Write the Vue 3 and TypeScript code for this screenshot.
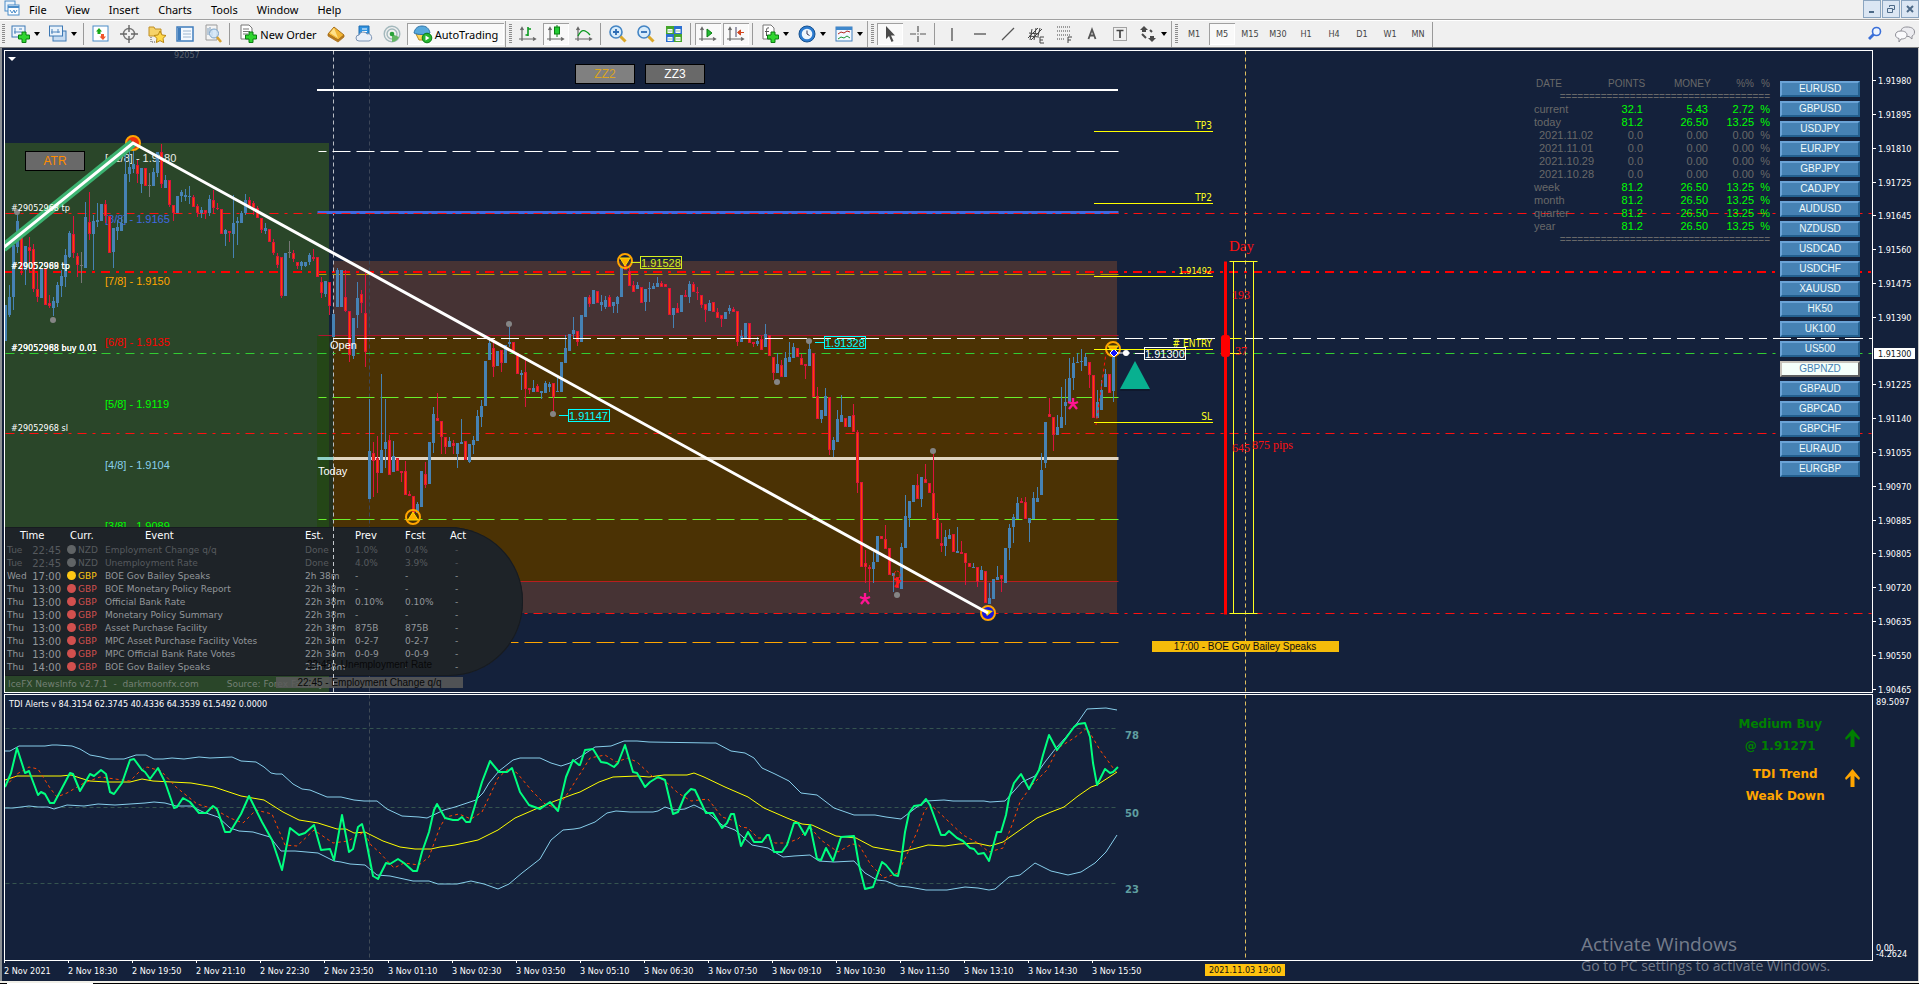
<script setup lang="ts">
interface Tool {
  kind: 'button' | 'drop' | 'sep' | 'grip' | 'period'
  icon?: string
  label?: string
  text?: string
  on?: boolean
}

const menus: string[] = ['File', 'View', 'Insert', 'Charts', 'Tools', 'Window', 'Help']

const axes = '<path d="M4 4v13M1 15h16M2.500 6l1.500-2.500L5.500 6M15 13.500l2.500 1.500-2.500 1.500" fill="none" stroke="#666" stroke-width="1.200"/>'
const plus = '<path d="M11 8h4v3h3.500v4H15v3.500h-4V15H7.500v-4H11z" fill="#2fd52f" stroke="#0a7d12"/>'

const icons: Record<string, string> = {
  newChart: '<rect x="1" y="2" width="13" height="11" fill="#eef5fc" stroke="#3d78b4"/><path d="M4 4v6M3 8h8M8 5h3" stroke="#4c84bc" fill="none"/>' + plus,
  profiles: '<rect x="5" y="7" width="13" height="10" fill="#c7dcf1" stroke="#3d78b4"/><rect x="1.500" y="2" width="13" height="10" fill="#eaf3fb" stroke="#3d78b4"/><path d="M4 5v5M3 8h9M10 5v4" stroke="#4c84bc"/>',
  market: '<rect x="2" y="2" width="15" height="15" fill="#fff" stroke="#4a8cc8"/><path d="M8 4l3 3.500H9.500V10h-3V7.500H5z" fill="#18a818"/><path d="M12 16l-3.500-3.500H10V10h3v2.500h2z" fill="#f0562a"/>',
  target: '<circle cx="10" cy="10" r="5.500" fill="none" stroke="#777" stroke-width="1.400"/><path d="M10 1v7M10 12v7M1 10h7M12 10h7" stroke="#666" stroke-width="1.400"/>',
  navigator: '<path d="M2 3h5l1 2h6v7H2z" fill="#f6d36a" stroke="#bf8f26"/><path d="M4 13v5M5 18h4" stroke="#555" stroke-dasharray="1 1"/><path d="M13 7l1.900 3.900 4.100.6-3 2.900.7 4.200-3.700-2-3.700 2 .7-4.200-3-2.900 4.100-.6z" fill="#ffd94a" stroke="#b98712"/>',
  dataWindow: '<rect x="2" y="3" width="16" height="14" fill="#f4f9ff" stroke="#3f7cbc" stroke-width="1.500"/><path d="M4.500 3.500v13" stroke="#3f7cbc" stroke-width="3"/><path d="M8 7h8M8 10h8M8 13h8" stroke="#9db6cf"/>',
  tester: '<path d="M3 1h11v15H3z" fill="#f4f4f4" stroke="#9a9a9a"/><path d="M5 4v7M7 3v6M9 5v7" stroke="#7d9cba"/><circle cx="11" cy="9.500" r="4.500" fill="#cfe5f7" fill-opacity=".8" stroke="#7aa2c8"/><path d="M14 13l4 5" stroke="#d6a12e" stroke-width="2.500"/>',
  newOrder: '<path d="M3 1h8l3 3v11H3z" fill="#fff" stroke="#777"/><path d="M5 5h6M5 7.500h7M5 10h5" stroke="#777"/>' + plus,
  book: '<path d="M8 3l10 8-6 5L2 10z" fill="#f2b634" stroke="#a8701c"/><path d="M2 10l10 6 6-5v2l-6 5-10-6z" fill="#b87a1e" stroke="#a8701c" stroke-width=".8"/><path d="M8 4l-4 5 8 5z" fill="#ffe18a"/>',
  cloud: '<path d="M5 2h10v10H5z" fill="#2f92e0" stroke="#1f6db0"/><path d="M8 5h5M8 7.500h5" stroke="#fff"/><path d="M5 17a3 3 0 010-6 4.500 4.500 0 018-1 3.500 3.500 0 012 7z" fill="#e9eff8" stroke="#7d94b4"/>',
  signal: '<g fill="none" stroke="#a3b8bc" stroke-width="1.400"><circle cx="10" cy="10" r="7.800"/><circle cx="10" cy="10" r="5"/></g><path d="M10 10v8a8 8 0 007-5" fill="#63b763"/><circle cx="10" cy="10" r="2.300" fill="#2aa13a"/>',
  auto: '<path d="M3 10h12l-2 6H6z" fill="#ffd45a" stroke="#b98b1d"/><path d="M1 9c1-5 4-7 8-7s7 2 8 7c-4 2-12 2-16 0z" fill="#58a9dc" stroke="#2f74a8"/><circle cx="14" cy="14" r="4.800" fill="#26b62e" stroke="#0c7d16"/><path d="M12.500 11.500l4 2.500-4 2.500z" fill="#fff"/>',
  bars: axes + '<path d="M10 3v9M10 5h3M7.500 11H10" stroke="#0a9a1e" stroke-width="1.600" fill="none"/>',
  candles: axes + '<path d="M11 1v12" stroke="#0a7d12"/><rect x="8.500" y="3" width="5" height="7" fill="#22cc33" stroke="#0a7d12"/>',
  line: axes + '<path d="M4 12c3-6 6-8 12-1" fill="none" stroke="#0a9a1e" stroke-width="1.300"/>',
  zoomIn: '<circle cx="8" cy="8" r="6" fill="#d8ecfb" stroke="#4485c4" stroke-width="1.600"/><path d="M8 5v6M5 8h6" stroke="#2d6db4" stroke-width="1.800"/><path d="M12.500 12.500l5 5" stroke="#dba829" stroke-width="3"/>',
  zoomOut: '<circle cx="8" cy="8" r="6" fill="#d8ecfb" stroke="#4485c4" stroke-width="1.600"/><path d="M5 8h6" stroke="#2d6db4" stroke-width="1.800"/><path d="M12.500 12.500l5 5" stroke="#dba829" stroke-width="3"/>',
  tile: '<path d="M2 2h8v8H2zM10 10h8v8h-8z" fill="#45a52a"/><path d="M10 2h8v8h-8zM2 10h8v8H2z" fill="#2b6fd0"/><path d="M3.500 5h5v4h-5zM11.500 5h5v4h-5zM3.500 13h5v4h-5zM11.500 13h5v4h-5z" fill="#f4fafc"/><path d="M4 7h4M12 7h4M4 15h4M12 15h4" stroke="#9abf9a"/>',
  scroll: axes + '<path d="M9 5l5 4-5 4z" fill="#22bb33" stroke="#0a7d12"/>',
  shift: axes + '<path d="M10 3v10" stroke="#446"/><path d="M11.500 8.500l3-2.500v5zM14 8.500h4" fill="#d2451e" stroke="#d2451e"/>',
  indicators: '<path d="M3 1h8l3 3v11H3z" fill="#fff" stroke="#777"/><path d="M9 4c-3-1-2.500 2-2.500 8M5 7.500h4" stroke="#555" fill="none"/>' + plus,
  clock: '<circle cx="10" cy="10" r="8" fill="#2d7cd0" stroke="#17518f"/><circle cx="10" cy="10" r="5.300" fill="#eef6fd"/><path d="M10 6.500V10l2.500 1.500" stroke="#335" fill="none"/>',
  template: '<rect x="2" y="3" width="16" height="14" fill="#f4f9ff" stroke="#3f7cbc"/><path d="M2 4.500h16" stroke="#3f88cc" stroke-width="3"/><path d="M4 10l3-2 3 1 3-2 3 1" stroke="#b3261e" fill="none"/><path d="M4 15l3-2 3 1 3-2 3 2" stroke="#1d9632" fill="none"/>',
  cursor: '<path d="M6 2v13l3-3 2.500 6 2-1-2.500-5.500h4z" fill="#4a4a4a"/>',
  cross: '<path d="M10 2v6M10 12v6M2 10h6M12 10h6" stroke="#555" stroke-width="1.200"/><circle cx="10" cy="10" r=".7" fill="#555"/>',
  vline: '<path d="M10 4v13" stroke="#444" stroke-width="1.200"/>',
  hline: '<path d="M4 10h12" stroke="#444" stroke-width="1.200"/>',
  trend: '<path d="M4 16L16 4" stroke="#555" stroke-width="1.200"/>',
  channel: '<path d="M2 14L12 4M5 16L16 5M3 9l10 1M3 12l10 1M6 5l-2 11M10 4L8 16M14 4l-2 8" stroke="#444"/><path d="M18 13h-4v6h4M14 16h3" stroke="#444" fill="none"/>',
  fibo: '<path d="M3 3h14M3 7h14M3 11h14M3 15h8" stroke="#444" stroke-dasharray="1 1"/><path d="M18 13h-4v6M14 16h3" stroke="#444" fill="none"/>',
  label: '<rect x="3.500" y="3.500" width="13" height="13" fill="none" stroke="#555" stroke-dasharray="1 1"/><path d="M6.500 6.500h7M10 6v8" stroke="#444" stroke-width="1.700"/>',
  letter: '<path d="M6.500 15L10 5.500 13.500 15M7.500 11.500h5" fill="none" stroke="#555" stroke-width="1.800"/>',
  shapes: '<path d="M6 2l4 4H8v2H4V6H2zM14 18l-4-4h2v-2h4v2h2z" fill="#4a4a4a"/><path d="M4 10l4 4M12 6l2 2" stroke="#4a4a4a" stroke-width="2"/>',
}

const b = (icon: string, label: string, on = false): Tool => ({ kind: 'button', icon, label, on })
const d = (icon: string, label: string): Tool => ({ kind: 'drop', icon, label })
const sep: Tool = { kind: 'sep' }
const grip: Tool = { kind: 'grip' }

const tools: Tool[] = [
  grip, d('newChart', 'New chart'), d('profiles', 'Profiles'), sep,
  b('market', 'Market Watch'), b('target', 'Data Window'), b('navigator', 'Navigator'), b('dataWindow', 'Terminal'), b('tester', 'Strategy Tester'), sep,
  { kind: 'button', icon: 'newOrder', label: 'New Order', text: 'New Order' },
  b('book', 'MetaEditor'), b('cloud', 'Virtual Hosting'), b('signal', 'Signals'),
  { kind: 'button', icon: 'auto', label: 'AutoTrading', text: 'AutoTrading', on: true },
  grip, b('bars', 'Bar chart'), b('candles', 'Candlesticks', true), b('line', 'Line chart'), sep,
  b('zoomIn', 'Zoom in'), b('zoomOut', 'Zoom out'), b('tile', 'Tile windows'), sep,
  b('scroll', 'Auto scroll', true), b('shift', 'Chart shift', true), sep,
  d('indicators', 'Indicators'), d('clock', 'Periods'), d('template', 'Templates'),
  grip, b('cursor', 'Cursor', true), b('cross', 'Crosshair'), sep,
  b('vline', 'Vertical line'), b('hline', 'Horizontal line'), b('trend', 'Trendline'), b('channel', 'Equidistant channel'), b('fibo', 'Fibonacci'),
  b('letter', 'Text'), b('label', 'Text label'), d('shapes', 'Arrows'),
  grip,
  ...['M1', 'M5', 'M15', 'M30', 'H1', 'H4', 'D1', 'W1', 'MN'].map((t): Tool => ({ kind: 'period', text: t, label: t, on: t === 'M5' })),
]

const symbols: string[] = [
  'EURUSD', 'GBPUSD', 'USDJPY', 'EURJPY', 'GBPJPY', 'CADJPY', 'AUDUSD', 'NZDUSD', 'USDCAD', 'USDCHF',
  'XAUUSD', 'HK50', 'UK100', 'US500', 'GBPNZD', 'GBPAUD', 'GBPCAD', 'GBPCHF', 'EURAUD', 'EURGBP',
]

const stats: { name: string; v: [string, string, string]; sub?: boolean }[] = [
  { name: 'current', v: ['32.1', '5.43', '2.72'] },
  { name: 'today', v: ['81.2', '26.50', '13.25'] },
  { name: '2021.11.02', v: ['0.0', '0.00', '0.00'], sub: true },
  { name: '2021.11.01', v: ['0.0', '0.00', '0.00'], sub: true },
  { name: '2021.10.29', v: ['0.0', '0.00', '0.00'], sub: true },
  { name: '2021.10.28', v: ['0.0', '0.00', '0.00'], sub: true },
  { name: 'week', v: ['81.2', '26.50', '13.25'] },
  { name: 'month', v: ['81.2', '26.50', '13.25'] },
  { name: 'quarter', v: ['81.2', '26.50', '13.25'] },
  { name: 'year', v: ['81.2', '26.50', '13.25'] },
]
const rule = '='.repeat(36)

const news: { day: string; time: string; cur: string; level: string; event: string; est: string; prev: string; fcst: string }[] = [
  { day: 'Tue', time: '22:45', cur: 'NZD', level: 'done', event: 'Employment Change q/q', est: 'Done', prev: '1.0%', fcst: '0.4%' },
  { day: 'Tue', time: '22:45', cur: 'NZD', level: 'done', event: 'Unemployment Rate', est: 'Done', prev: '4.0%', fcst: '3.9%' },
  { day: 'Wed', time: '17:00', cur: 'GBP', level: 'mid', event: 'BOE Gov Bailey Speaks', est: '2h 38m', prev: '-', fcst: '-' },
  { day: 'Thu', time: '13:00', cur: 'GBP', level: 'high', event: 'BOE Monetary Policy Report', est: '22h 38m', prev: '-', fcst: '-' },
  { day: 'Thu', time: '13:00', cur: 'GBP', level: 'high', event: 'Official Bank Rate', est: '22h 38m', prev: '0.10%', fcst: '0.10%' },
  { day: 'Thu', time: '13:00', cur: 'GBP', level: 'high', event: 'Monetary Policy Summary', est: '22h 38m', prev: '-', fcst: '-' },
  { day: 'Thu', time: '13:00', cur: 'GBP', level: 'high', event: 'Asset Purchase Facility', est: '22h 38m', prev: '875B', fcst: '875B' },
  { day: 'Thu', time: '13:00', cur: 'GBP', level: 'high', event: 'MPC Asset Purchase Facility Votes', est: '22h 38m', prev: '0-2-7', fcst: '0-2-7' },
  { day: 'Thu', time: '13:00', cur: 'GBP', level: 'high', event: 'MPC Official Bank Rate Votes', est: '22h 38m', prev: '0-0-9', fcst: '0-0-9' },
  { day: 'Thu', time: '14:00', cur: 'GBP', level: 'high', event: 'BOE Gov Bailey Speaks', est: '23h 38m', prev: '-', fcst: '-' },
]

const prices: [string, number][] = [
  ['1.91980', 80], ['1.91895', 114], ['1.91810', 148], ['1.91725', 182], ['1.91645', 215], ['1.91560', 249],
  ['1.91475', 283], ['1.91390', 317], ['1.91225', 384], ['1.91140', 418], ['1.91055', 452], ['1.90970', 486],
  ['1.90885', 520], ['1.90805', 553], ['1.90720', 587], ['1.90635', 621], ['1.90550', 655], ['1.90465', 689],
]

const times: string[] = [
  '2 Nov 2021', '2 Nov 18:30', '2 Nov 19:50', '2 Nov 21:10', '2 Nov 22:30', '2 Nov 23:50', '3 Nov 01:10', '3 Nov 02:30', '3 Nov 03:50',
  '3 Nov 05:10', '3 Nov 06:30', '3 Nov 07:50', '3 Nov 09:10', '3 Nov 10:30', '3 Nov 11:50', '3 Nov 13:10', '3 Nov 14:30', '3 Nov 15:50',
]

/* Candles, one every 4px: direction, body top, body bottom, high, low ('.' = same as the body).
   Three units make a pixel; each run names the first candle and the y its values count from. */
const runs: [number, number, string][] = [
  [0, 40, `b 795 902 . .|b 772 825 735 830|b 615 770 590 810|b 543 620 520 640|r 563 690 . 705|b 617 690 . 735|r 620 632 590 700|r 627 748 612 757|r 748 770 700 785|b 688 775 . .|r 685 795 . .|r 790 797 765 805|b 783 805 770 828|b 735 790 725 800|b 708 738 690 770|b 645 710 628 740|b 578 652 572 655|r 582 640 528 655|r 648 675 640 710|g 674 677 635 730|b 531 685 485 .|r 545 582 455 600|b 543 583 525 690|b 540 546 490 560|b 492 543 . .|r 492 527 480 550|r 527 638 . .|b 563 636 . 685|b 560 573 540 600|b 548 573 530 .|b 402 548 330 .|b 380 402 330 425|b 372 388 320 400|r 375 403 360 430|b 385 432 . 460|r 385 437 . .|g 434 437 400 470|b 397 437 385 .|b 337 398 . 410|r 337 432 312 445|b 420 443 405 .|r 420 495 . 502|r 495 520 . 543|b 468 520 . .|b 456 468 450 487|b 465 470 447 482|b 467 472 438 492|r 470 500 465 .|r 497 520 492 530|b 510 520 502 535|r 510 520 . 537|b 478 520 465 527|r 480 503 450 520|r 503 507 490 510|r 507 582 . .|b 570 582 567 617|r 572 578 . 605|b 548 582 465 653|b 543 548 530 615|b 518 548 512 .|b 480 520 462 525|r 480 500 470 .|r 490 505 483 525|r 503 535 497 .|r 535 570 . 580|b 565 572 548 582|r 568 605 . .|r 605 638 597 645|r 648 675 640 685|r 652 768 . 775|b 640 768 . .|g 637 640 603 655|r 640 657 630 665|r 667 678 . 687|b 667 678 662 690|b 667 678 . 682|b 645 667 640 675|r 650 657 627 662|r 652 712 . .|r 725 760 710 775|b 723 763 . 770|r 725 797 . 825|b 822 890 . .|b 690 800 685 .|b 690 800 . .|r 772 812 690 815|r 812 945 . 965|b 835 948 . 958|b 775 825 725 865|r 763 790 750 820|r 820 935 700 980`],
  [91, 350, `b 303 448 148 .|r 308 332 275 440|r 325 370 258 430|b 300 368 72 .|b 275 297 148 355|r 270 375 255 .|b 318 365 272 .|r 323 363 . .|r 363 370 . 395|r 363 435 332 .|r 432 437 422 .|r 437 490 . .|b 462 488 455 .|b 363 470 . .|r 373 405 335 415|b 275 402 . .|b 192 278 170 310|r 205 213 130 .|r 213 262 . 313|r 262 290 . 313|b 273 290 262 .|r 278 287 270 313|b 280 313 . 355|b 275 283 207 .|r 273 330 . .|b 283 335 . 340|b 270 285 258 313|b 198 272 180 .|b 168 200 150 230|b 33 168 . .`],
  [121, 40, `b 908 960 900 .|r 925 980 897 1010|b 932 978 . .|r 930 970 . 995|b 915 970 . .|b 907 912 860 920|r 905 940 . .|r 940 1003 . .`],
  [129, 350, `b 68 75 60 120|r 65 117 30 170|r 113 120 . 132|b 115 127 90 .|r 108 127 103 .|b 122 130 . 148|b 100 130 93 .|b 103 110 97 125|r 100 140 . 190`],
  [138, 330, `b 183 187 140 .|b 97 187 . .|b 55 100 15 .`],
  [141, 40, `b 882 933 . .|b 870 882 830 897|r 873 905 . 917|b 825 907 . .|b 770 830 . .|r 772 792 765 800|b 750 792 . .|r 753 790 . .|b 787 795 765 812|b 780 800 767 808|r 772 800 765 .|b 785 798 . 818|b 770 792 767 818|b 680 772 . .|r 675 690 . .|r 693 738 675 .|r 735 755 722 .|b 735 748 727 .|r 740 788 . .|b 747 787 . 812|b 745 748 727 785|b 738 746 728 .|b 728 741 710 .|r 730 740 722 .|r 732 742 . .|r 745 825 . .|b 805 825 . 863|r 803 818 790 .|b 765 815 . .|r 765 770 750 .|b 732 770 723 790|r 733 757 725 .|r 755 760 742 780|r 765 795 . 805|r 793 810 . 845|b 790 812 780 .|r 787 817 . .|r 815 835 805 .|r 825 838 . 860|b 815 838 . .|b 803 812 795 822|r 807 815 800 .|r 812 905 . 917|b 888 907 870 .|b 850 893 . .|r 850 908 . .|r 905 912 . 920|b 903 912 890 917|r 897 930 888 .|b 882 922 853 .|r 885 948 . .`],
  [192, 330, `r 80 130 . 150|b 103 130 70 .|r 105 142 90 .|b 83 142 65 .|b 80 97 37 .|b 52 85 40 .|r 55 82 . .|r 85 105 72 .|r 103 108 . 148|b 57 108 40 .|r 70 200 . .|r 197 268 170 .|b 240 268 . 280|b 198 258 173 .|r 200 360 . 375|b 330 360 322 380|b 268 335 240 .|b 255 275 195 .|r 263 290 . .|b 258 290 . .|r 255 305 223 .|r 307 458 300 490|r 457 712 . .|r 700 712 660 760|r 710 717 705 785|b 695 717 665 760|b 618 695 . .|r 617 628 . .|r 628 658 585 .|r 653 735 . .|b 730 737 . 785|r 740 775 . .|b 652 778 640 .|b 558 653 495 .|b 513 565 . 590|b 465 517 . .|r 465 507 432 .|b 440 507 . 530|r 447 458 402 .|r 460 488 . .|r 490 567 370 .|r 565 628 550 .|r 640 648 580 665|b 620 647 600 678|b 615 628 598 .|r 612 665 . .|b 663 668 590 .|r 665 672 632 .|r 670 700 . 765|r 698 712 . .|b 710 715 698 .|r 710 755 . 770|b 720 750 708 .|r 722 820 . .|b 805 822 760 .|b 747 808 . .|b 740 750 708 .|r 735 747 . 785|b 653 760 . .|b 595 653 583 690|b 560 590 552 640|b 520 568 500 .|r 513 518 503 .|r 515 567 500 .|b 565 578 . 635|b 503 568 487 .|b 503 515 470 .|b 420 495 370 .|b 277 400 . 415|r 252 262 203 .|r 262 315 . 362|b 292 315 255 .|b 262 293 172 .|b 215 228 148 285|b 143 217 85 .|b 98 145 80 180|b 95 98 68 .|b 92 96 57 122|b 80 107 70 .|r 97 135 . 175|r 135 265 . .|b 215 265 180 .|b 180 240 150 .|b 133 170 118 .|r 133 190 . .|b 80 182 . 215`],
]

interface Candle { kind: string; x: number; top: number; h: number; hi: number; len: number }

const candles: Candle[] = runs.flatMap(([first, base, data]) =>
  data.split('|').map((row, i) => {
    const [kind, t, bt, hi, lo] = row.split(' ')
    const y = (v: string) => Math.round(base + Number(v) / 3)
    const top = y(t)
    const bottom = Math.max(y(bt), top + 1)
    const high = hi === '.' ? top : y(hi)
    const low = lo === '.' ? bottom : y(lo)
    return { kind, x: 4 + 4 * (first + i), top, h: bottom - top, hi: high, len: low - high }
  }),
)

/* Indicator curves, digitised in two halves; each half keeps its own x origin. */
const trace = (a: string, c: string): string => {
  const half = (s: string, x0: number) => s.split(' ').map((p) => {
    const [x, y] = p.split(',').map(Number)
    return `${Math.round(x0 + x * 0.3827)},${Math.round(685 + y / 3)}`
  })
  return [...half(a, 0), ...half(c, 580)].join(' ')
}

const upper = trace(
  '14,197 25,197 50,182 118,182 135,179 150,181 188,182 210,192 235,211 265,216 285,222 325,223 355,209 382,209 402,222 425,223 450,220 480,223 520,217 550,219 605,217 630,228 670,232 690,247 708,265 722,268 738,266 765,297 790,313 810,315 855,335 890,337 925,346 950,349 985,349 1010,373 1050,394 1095,395 1115,400 1160,375 1190,367 1220,353 1245,345 1262,325 1278,293 1305,258 1340,225 1360,218 1410,218 1440,235 1465,244 1490,233',
  '0,215 40,185 80,182 115,167 150,168 180,171 340,173 355,173 395,198 430,203 455,220 475,250 510,268 545,287 578,325 620,330 665,370 715,391 770,389 800,397 840,402 880,365 905,347 950,346 975,349 1010,347 1055,348 1072,352 1110,349 1135,317 1155,292 1190,273 1215,232 1245,190 1270,155 1300,110 1325,72 1375,68 1402,76')
const middle = trace(
  '14,285 45,274 160,274 185,270 210,280 235,287 280,290 340,290 370,282 400,287 500,293 560,305 630,333 690,345 740,382 780,405 830,413 880,432 905,433 925,444 955,442 1000,467 1045,487 1085,492 1125,492 1150,487 1190,481 1250,465 1300,435 1345,400 1405,370 1450,347 1500,328',
  '0,320 50,290 85,277 150,273 180,277 220,271 280,271 297,265 325,275 380,305 440,337 480,368 540,400 580,416 605,420 640,437 670,454 720,460 765,485 840,502 870,492 910,481 955,482 990,478 1035,475 1072,484 1105,470 1150,435 1195,400 1230,380 1265,365 1300,333 1335,305 1350,300 1402,262')
const lower = trace(
  '14,370 35,370 75,362 100,366 125,367 140,371 175,361 220,364 255,358 300,359 380,355 402,350 430,355 460,362 500,362 530,382 570,395 600,428 625,438 660,441 705,455 735,498 770,497 830,505 872,528 890,530 915,538 955,539 985,570 1020,574 1080,589 1120,587 1145,596 1195,597 1230,589 1265,596 1300,613 1330,598 1365,565 1410,522 1440,465 1470,435 1500,432',
  '0,428 40,410 70,384 95,377 130,380 190,382 205,378 222,367 245,375 275,373 297,360 330,378 370,420 405,435 450,480 490,488 530,517 560,514 600,511 625,527 665,532 715,529 745,563 775,585 800,589 830,604 860,606 905,616 960,616 1005,606 1040,608 1070,616 1085,612 1120,575 1150,570 1190,535 1230,557 1275,569 1310,560 1345,535 1375,500 1402,450')
const signalLine = trace(
  '14,305 45,268 75,245 100,253 130,310 150,337 175,325 220,295 260,277 300,283 340,287 365,258 385,247 420,257 460,305 515,357 560,372 600,400 635,413 670,375 710,388 745,480 775,484 820,435 870,475 910,467 950,440 970,480 990,500 1030,550 1055,535 1095,540 1120,515 1150,425 1165,395 1200,388 1230,403 1260,380 1300,278 1330,250 1350,265 1390,318 1425,357 1455,370 1485,325 1510,275',
  '0,268 25,220 65,211 95,230 125,220 150,230 190,275 220,285 255,325 290,347 335,342 370,395 405,408 420,427 440,430 465,460 490,460 510,473 540,475 570,462 600,425 630,465 675,502 710,478 730,480 760,540 795,578 830,563 860,495 880,440 900,380 915,358 960,405 1000,450 1040,475 1070,502 1105,490 1130,420 1150,350 1180,300 1220,255 1250,190 1290,158 1325,130 1360,195 1400,262')
const fast = trace(
  '14,305 28,265 45,190 66,263 76,257 98,330 108,321 118,326 130,355 142,355 160,315 182,265 190,268 210,318 235,266 245,272 265,254 278,268 288,322 297,326 320,295 340,225 350,222 372,255 380,260 393,283 412,250 430,290 455,370 463,366 478,340 497,350 520,384 537,384 556,362 567,372 588,441 600,440 630,387 650,333 685,410 710,465 736,555 758,430 780,450 797,445 820,420 840,495 862,492 872,525 893,390 913,500 922,493 935,425 945,417 955,450 975,573 987,582 1008,533 1020,537 1040,522 1055,533 1080,558 1090,558 1103,500 1120,440 1133,375 1143,358 1163,398 1185,404 1197,404 1207,397 1218,411 1228,410 1245,350 1260,290 1280,227 1303,260 1325,261 1337,248 1360,320 1382,360 1410,371 1437,350 1457,378 1478,275 1498,225 1513,240',
  '0,240 13,195 35,193 55,230 70,233 88,247 100,235 118,180 138,262 150,265 170,306 182,290 205,276 222,285 243,387 255,382 275,330 290,312 300,314 328,385 348,385 370,430 383,415 395,388 403,388 420,483 438,442 455,470 475,472 488,450 495,450 507,500 528,500 540,480 558,415 570,413 588,450 600,420 620,522 630,525 642,488 662,528 682,455 715,454 730,540 745,612 765,607 788,532 800,540 820,570 830,573 840,530 850,440 860,385 872,363 890,360 903,342 915,360 942,450 955,450 965,438 985,460 1000,468 1018,490 1030,492 1040,507 1055,505 1070,528 1090,442 1100,440 1113,390 1120,340 1135,295 1152,267 1173,313 1200,255 1210,210 1225,150 1247,195 1270,160 1290,125 1300,118 1320,114 1332,155 1340,235 1352,300 1372,252 1385,265 1392,262 1405,245')

const dots: [number, number][] = [[17, 212], [53, 320], [509, 324], [553, 414], [777, 382], [809, 341], [933, 451], [897, 595]]
const stars: [number, number][] = [[865, 599], [1073, 404]]

const levels: { text: string; y: number; color: string }[] = [
  { text: '[+1/8] - 1.9180', y: 162, color: '#e8ece8' },
  { text: '[8/8] - 1.9165', y: 223, color: '#4169e1' },
  { text: '[7/8] - 1.9150', y: 285, color: '#ffa500' },
  { text: '[6/8] - 1.9135', y: 346, color: '#ff0000' },
  { text: '[5/8] - 1.9119', y: 408, color: '#00ff00' },
  { text: '[4/8] - 1.9104', y: 469, color: '#87ceeb' },
  { text: '[3/8] - 1.9089', y: 530, color: '#00ff00' },
]

const targets: { text: string; y: number; small?: boolean }[] = [
  { text: 'TP3', y: 131 }, { text: 'TP2', y: 203 }, { text: '1.91492', y: 276, small: true }, { text: '# ENTRY', y: 349 }, { text: 'SL', y: 422 },
]

const tags: { text: string; x: number; y: number; color: string }[] = [
  { text: '1.91528', x: 640, y: 262, color: '#d4f020' },
  { text: '1.91328', x: 824, y: 342, color: '#00ffff' },
  { text: '1.91147', x: 568, y: 415, color: '#00ffff' },
  { text: '1.91300', x: 1144, y: 353, color: '#ffffff' },
]

const orders: { text: string; y: number }[] = [
  { text: '#29052968 tp', y: 211 }, { text: '#29052988 tp', y: 269 }, { text: '#29052969 tp', y: 269 },
  { text: '#29052988 buy 0.01', y: 351 }, { text: '#29052968 buy 0.01', y: 351 }, { text: '#29052968 sl', y: 431 },
]
</script>

<template>
  <div class="app">
    <header class="menubar">
      <svg class="logo" width="16" height="16" viewBox="0 0 16 16">
        <rect x="1" y="1" width="10" height="10" fill="#eaf3fb" stroke="#4a8cc8" />
        <rect x="4" y="5" width="11" height="10" fill="#fff" stroke="#4a8cc8" />
        <path d="M4 7h11" stroke="#4a8cc8" stroke-width="2" />
        <path d="M6 10l2 3 2-3 1 3 2-3" stroke="#4a8cc8" fill="none" />
      </svg>
      <nav class="menus">
        <button v-for="m in menus" :key="m" type="button">{{ m }}</button>
      </nav>
      <div class="winbtns">
        <button type="button" aria-label="Minimize"><svg width="10" height="10"><path d="M2 8h5" stroke="#4d6a88" stroke-width="2" /></svg></button>
        <button type="button" aria-label="Restore"><svg width="10" height="10"><path d="M3.500 3V1.500h5v4H7M1.500 4.500h5v4h-5z" stroke="#4d6a88" fill="none" /></svg></button>
        <button type="button" aria-label="Close"><svg width="10" height="10"><path d="M2 2l6 6M8 2L2 8" stroke="#4d6a88" stroke-width="2" /></svg></button>
      </div>
    </header>

    <div class="toolbar">
      <template v-for="(t, i) in tools" :key="i">
        <span v-if="t.kind === 'sep'" class="sep"></span>
        <span v-else-if="t.kind === 'grip'" class="grip"></span>
        <button v-else type="button" :class="['tool', t.kind, { on: t.on, wide: t.text && t.icon }]" :aria-label="t.label">
          <svg v-if="t.icon" width="20" height="20" viewBox="0 0 20 20" v-html="icons[t.icon]"></svg>
          <span v-if="t.text">{{ t.text }}</span>
          <svg v-if="t.kind === 'drop'" class="caret" width="6" height="4"><path d="M0 0h6L3 4z" /></svg>
        </button>
      </template>
      <span class="endline"></span>
      <div class="right-tools">
        <button type="button" class="tool" aria-label="Search">
          <svg width="16" height="16" viewBox="0 0 16 16"><circle cx="9.500" cy="5.500" r="4" fill="#eef5ff" stroke="#3a6fd8" stroke-width="1.600" /><path d="M6.500 8.500L2 13" stroke="#3a6fd8" stroke-width="2.800" /></svg>
        </button>
        <button type="button" class="tool" aria-label="Chat">
          <svg width="22" height="18" viewBox="0 0 22 18"><path d="M13 2c5 0 7.500 2 7.500 5 0 2-1 3.500-2.500 4v3l-3-2.500c-5 0-8-1-8-4.500s2-5 6-5z" fill="#ececf0" stroke="#8e8e96" /><path d="M7 6c3.500 0 6 1.500 6 4s-2 4-6 4l-2 3v-3.500c-2-.5-3.500-1.500-3.500-3.500 0-2.500 2-4 5.500-4z" fill="#fafafc" stroke="#8e8e96" /></svg>
        </button>
      </div>
    </div>

    <main class="chart">
      <section class="row main-row">
        <div class="plot">
          <svg class="canvas" width="100%" height="100%">
            <g transform="translate(-5 -51)">
              <g shape-rendering="crispEdges">
                <rect x="5" y="143" width="324" height="549" fill="#2a4629" />
                <rect x="317" y="336" width="12" height="245" fill="#244617" />
                <rect x="329" y="336" width="4" height="245" fill="#23301f" />
                <rect x="333" y="261" width="784" height="75" fill="#463334" />
                <rect x="333" y="336" width="784" height="245" fill="#4b3204" />
                <rect x="333" y="581" width="784" height="32" fill="#463334" />
              </g>

              <text x="174" y="58" class="t9" fill="#59606b">92057</text>
              <text v-for="l in levels" :key="l.text" x="105" :y="l.y" class="t11" :fill="l.color">{{ l.text }}</text>

              <path d="M317 90H1118" stroke="#fff" stroke-width="2" />
              <path d="M5 272H3000" stroke="#ff0000" stroke-width="2" class="dashdot" />
              <!-- half-pixel shift puts every hairline on a pixel row -->
              <g class="lines" transform="translate(0.5 0.5)">
                <path d="M333 50V692" stroke="#b9bdc4" stroke-dasharray="4 3" />
                <path d="M369 50V692" stroke="#3c4658" stroke-dasharray="4 3" />
                <path d="M318 151H1118" stroke="#fff" class="long late" />
                <path d="M317 212H1118" stroke="#4169e1" stroke-width="3" />
                <path d="M5 213H3000" stroke="#ff1010" class="dashdot" />
                <path d="M318 274H1118" stroke="#b8a000" class="long late" />
                <path d="M318 335H1118" stroke="#b01430" />
                <path d="M318 397H1118" stroke="#6af02c" class="long late" />
                <path d="M5 433H3000" stroke="#ff1010" class="dashdot" />
                <path d="M317 458H333" stroke="#8fd0c8" stroke-width="3" />
                <path d="M333 458H1118" stroke="#e2d6c2" stroke-width="3" />
                <path d="M318 519H1118" stroke="#6af02c" class="long late" />
                <path d="M318 581H1118" stroke="#b81e1e" />
                <path d="M318 642H1118" stroke="#ffa500" class="long late" />
                <path d="M5 613H3000" stroke="#ff1010" class="dashdot" />
                <path d="M5 353H3000" stroke="#32cd32" class="dashdot" />
              </g>

              <g shape-rendering="crispEdges">
                <g v-for="(c, i) in candles" :key="i" :class="c.kind">
                  <rect :x="c.x + 1" :y="c.hi" width="1" :height="c.len" />
                  <rect :x="c.x" :y="c.top" width="3" :height="c.h" />
                  <rect v-if="c.kind === 'r' && c.h > 2" class="core" :x="c.x + 1" :y="c.top + 1" width="1" :height="c.h - 2" />
                </g>
              </g>
              <path d="M333 338H3000" stroke="#fff" class="long" transform="translate(0 0.5)" />

              <circle v-for="p in dots" :key="p[0]" :cx="p[0]" :cy="p[1]" r="3" fill="#858585" />
              <g v-for="s in stars" :key="s[0]" :transform="`translate(${s[0]} ${s[1]})`">
                <path d="M0 -6V0M0 0L-5 -2M0 0L5 -2M0 0L-4 5M0 0L4 5" stroke="#ff1493" stroke-width="2.400" />
              </g>
              <ellipse cx="897" cy="575" rx="3" ry="4" fill="none" stroke="#ff1a1a" stroke-dasharray="3 1" />
              <path d="M894 579l6 2-5 6" fill="none" stroke="#ff1a1a" stroke-width="2" />

              <g fill="none" stroke="#ffa500" stroke-width="2">
                <circle cx="133" cy="143" r="7" fill="#e83010" />
                <circle cx="625" cy="261" r="7" />
                <circle cx="413" cy="517" r="7" />
                <circle cx="1113" cy="349" r="7" />
                <circle cx="988" cy="613" r="7" fill="#1818d8" />
              </g>
              <path d="M620 258h10l-5 8z" fill="#ffb000" stroke="#ffe000" />
              <path d="M408 520l5-8 5 8z" fill="#ffb000" stroke="#ffe000" />
              <path d="M1108 346h10l-5 7z" fill="#ffb000" stroke="#ffe000" />
              <path d="M984 609l3 7 6-5z" fill="#ffe000" />

              <path d="M3 248L133 143" stroke="#3cb371" stroke-width="9" />
              <path d="M3 248L133 143L988 613" fill="none" stroke="#fff" stroke-width="3" />

              <path d="M1096 425L1106 353" stroke="#ff1010" stroke-dasharray="3 3" />
              <path d="M1116 353H1130" stroke="#fff" />
              <path d="M1110 353l4-4 4 4-4 4z" fill="#1414ff" stroke="#fff" />
              <circle cx="1126" cy="353" r="3" fill="#fff" />
              <path d="M1135 364L1150 391H1120z" fill="#0b1220" opacity=".5" />
              <path d="M1135 361L1150 389H1120z" fill="#08b090" />

              <g shape-rendering="crispEdges" transform="translate(0.5 0.5)">
                <path v-for="t in targets" :key="t.text" :d="`M1093 ${t.y}H1212`" stroke="#ffff00" />
                <g v-for="g in tags" :key="g.text" fill="none" :stroke="g.color">
                  <path :d="`M${g.x - 10} ${g.y}h10`" />
                  <rect :x="g.x" :y="g.y - 6" width="41" height="12" />
                </g>
              </g>
              <text v-for="t in targets" :key="t.text" x="1212" :y="t.y - 2" text-anchor="end" :class="t.small ? 't9' : 't10'" fill="#ffff20">{{ t.text }}</text>
              <text v-for="g in tags" :key="g.text" :x="g.x + 1" :y="g.y + 5" class="t11" :fill="g.color">{{ g.text }}</text>
              <text v-for="o in orders" :key="o.text + o.y" x="11" :y="o.y" class="t9" fill="#fff">{{ o.text }}</text>
              <text x="330" y="349" class="t11" fill="#fff">Open</text>
              <text x="318" y="475" class="t11" fill="#fff">Today</text>

              <g transform="translate(0.5 0.5)">
                <path d="M1245 50V3000" stroke="#e0c060" stroke-dasharray="4 3" />
                <path d="M1225 261V614" stroke="#ff0000" stroke-width="3" />
                <path d="M1229 261h28M1229 613h28M1233 261V613M1253 261V613M1229 338h12M1229 353h12" stroke="#ffff20" fill="none" />
              </g>
              <rect x="1221" y="335" width="9" height="22" rx="3" fill="#ff0000" />
              <g class="serif" fill="#ff1010">
                <text x="1229" y="251" class="big">Day</text>
                <text x="1232" y="299">193</text>
                <text x="1235" y="355">37</text>
                <text x="1232" y="452">645</text>
                <text x="1252" y="449">875 pips</text>
              </g>
              <rect x="1152" y="641" width="187" height="11" fill="#f5bc0a" />
              <text x="1245" y="650" class="arial10" text-anchor="middle" fill="#101010">17:00 - BOE Gov Bailey Speaks</text>
              <path d="M8 57h8l-4 4z" fill="#fff" />
            </g>
          </svg>

          <button type="button" class="ind atr">ATR</button>
          <div class="zz">
            <button type="button" class="ind on">ZZ2</button>
            <button type="button" class="ind">ZZ3</button>
          </div>

          <table class="stats">
            <colgroup><col class="c1" /><col class="c2" /><col class="c3" /><col class="c4" /><col class="c5" /></colgroup>
            <thead>
              <tr><th class="name">DATE</th><th class="out">POINTS</th><th class="out">MONEY</th><th>%%</th><th>%</th></tr>
            </thead>
            <tbody>
              <tr class="rule"><td colspan="5">{{ rule }}</td></tr>
              <tr v-for="s in stats" :key="s.name" :class="{ sub: s.sub }">
                <td class="name">{{ s.name }}</td><td>{{ s.v[0] }}</td><td>{{ s.v[1] }}</td><td>{{ s.v[2] }}</td><td>%</td>
              </tr>
              <tr class="rule"><td colspan="5">{{ rule }}</td></tr>
            </tbody>
          </table>

          <div class="symbols">
            <button v-for="s in symbols" :key="s" type="button" :class="{ active: s === 'GBPNZD' }">{{ s }}</button>
          </div>

          <div class="news">
            <div class="news-panel">
              <table>
                <colgroup>
                  <col class="n-day" /><col class="n-time" /><col class="n-dot" /><col class="n-cur" /><col class="n-event" />
                  <col class="n-est" /><col class="n-prev" /><col class="n-fcst" /><col class="n-act" />
                </colgroup>
                <thead>
                  <tr>
                    <th colspan="2" class="h-time">Time</th><th colspan="2">Curr.</th><th class="h-event">Event</th>
                    <th>Est.</th><th>Prev</th><th>Fcst</th><th>Act</th>
                  </tr>
                </thead>
                <tbody>
                  <tr v-for="(n, i) in news" :key="i" :class="n.level">
                    <td class="day">{{ n.day }}</td><td class="time">{{ n.time }}</td><td><i class="dot"></i></td><td class="cur">{{ n.cur }}</td>
                    <td>{{ n.event }}</td><td>{{ n.est }}</td><td>{{ n.prev }}</td><td>{{ n.fcst }}</td><td class="act">-</td>
                  </tr>
                </tbody>
              </table>
            </div>
            <div class="news-foot">
              <span>IceFX NewsInfo v2.7.1&nbsp; -&nbsp; darkmoonfx.com</span>
              <span class="source">Source: Forex Factory</span>
            </div>
            <span class="past over">22:45 - Unemployment Rate</span>
            <span class="past">22:45 - Employment Change q/q</span>
            <span class="vdash"></span>
          </div>
        </div>

        <div class="axis">
          <svg width="100%" height="100%" overflow="visible">
            <g transform="translate(-1873 -50)">
              <g v-for="p in prices" :key="p[0]">
                <path :d="`M1873 ${p[1]}h3`" stroke="#fff" shape-rendering="crispEdges" />
                <text x="1878" :y="p[1] + 4" class="t9" fill="#fff">{{ p[0] }}</text>
              </g>
              <rect x="1874" y="348" width="41" height="11" fill="#fff" />
              <text x="1878" y="357" class="t9" fill="#101820">1.91300</text>
            </g>
          </svg>
        </div>
      </section>

      <section class="row sub-row">
        <div class="plot">
          <svg class="canvas" width="100%" height="100%">
            <g transform="translate(-5 -695)">
              <g transform="translate(0.5 0.5)" fill="none">
                <path d="M5 728H1117M5 807H1117M5 883H1117" stroke="#35544f" stroke-dasharray="4 3" />
                <path d="M369 694V3000" stroke="#3f4a56" stroke-dasharray="4 3" />
                <path d="M1245 694V3000" stroke="#e0c060" stroke-dasharray="4 3" />
              </g>
              <g fill="none">
                <polyline :points="upper" stroke="#87ceeb" />
                <polyline :points="lower" stroke="#87ceeb" />
                <polyline :points="middle" stroke="#ffff00" />
                <polyline :points="signalLine" stroke="#ff4500" stroke-dasharray="3 3" />
                <polyline :points="fast" stroke="#00ff7f" stroke-width="2" stroke-linejoin="round" />
              </g>
              <text x="9" y="707" class="t9" fill="#fff">TDI Alerts v 84.3154 62.3745 40.4336 64.3539 61.5492 0.0000</text>
              <g class="lvl" fill="#5f9ea0">
                <text x="1125" y="739">78</text>
                <text x="1125" y="817">50</text>
                <text x="1125" y="893">23</text>
              </g>
            </g>
          </svg>
          <div class="signals">
            <div class="sig-text">
              <p class="buy">Medium Buy<br />@ 1.91271</p>
              <p>TDI Trend<br />Weak Down</p>
            </div>
            <div class="sig-arrows">
              <svg width="15" height="18" viewBox="0 0 15 18"><path d="M7.500 0L15 9l-1 2-4.500-4V18h-4V7L1 11 0 9z" fill="#008000" /></svg>
              <svg width="15" height="18" viewBox="0 0 15 18"><path d="M7.500 0L15 9l-1 2-4.500-4V18h-4V7L1 11 0 9z" fill="#ffa500" /></svg>
            </div>
          </div>
        </div>
        <div class="axis sub-axis">
          <span>89.5097</span>
          <span class="low">0.00</span>
          <span class="lowest">-4.2624</span>
        </div>
      </section>

      <div class="timeline">
        <span v-for="t in times" :key="t" class="tick">{{ t }}</span>
        <span class="badge">2021.11.03 19:00</span>
      </div>

      <div class="watermark">
        <p class="wm-title">Activate Windows</p>
        <p>Go to PC settings to activate Windows.</p>
      </div>
    </main>
    <footer class="statusline"><span></span></footer>
  </div>
</template>

<style>
html, body {
  margin: 0;
  height: 100%;
  background: #14213b;
}
</style>

<style scoped>
.app {
  display: flex;
  flex-direction: column;
  height: 100vh;
  overflow: hidden;
  background: #f0f0f0;
  font-family: "DejaVu Sans Condensed", "DejaVu Sans", sans-serif;
  font-size: 9px;
  color: #fff;
}
button {
  margin: 0;
  padding: 0;
  border: 0;
  background: none;
  font: inherit;
  color: inherit;
  display: flex;
  align-items: center;
  justify-content: center;
  flex: none;
}
.menubar {
  display: flex;
  align-items: center;
  height: 19px;
  flex: none;
  border-bottom: 1px solid #a0a0a0;
  color: #000;
  font: 11px "Noto Sans", sans-serif;
}
.logo { margin: 0 0 4px 4px; }
.menus { display: flex; flex: 1; gap: 1px; }
.menus button { padding: 0 9px; height: 18px; }
.winbtns { display: flex; gap: 1px; align-self: flex-start; }
.winbtns button {
  width: 18px;
  height: 18px;
  border: 1px solid #8ba5c0;
  background: #dbe6f3;
}
.toolbar {
  display: flex;
  align-items: center;
  height: 26px;
  flex: none;
  border-top: 1px solid #fff;
  color: #111;
}
.tool {
  width: 26px;
  height: 22px;
  margin: 0 1px;
  color: #444;
}
.tool.on {
  background: #f9f9f9;
  box-shadow: inset 1px 1px 0 #a0a0a0, inset -1px -1px 0 #fff;
}
.tool.wide {
  width: 87px;
  gap: 2px;
  font: 11px "Noto Sans", sans-serif;
  color: #000;
}
.tool.wide.on { width: 97px; }
.tool.drop {
  width: 35px;
  gap: 3px;
}
.caret { fill: #000; }
.sep {
  flex: none;
  width: 1px;
  height: 22px;
  margin: 0 3px 0 2px;
  background: #999;
}
.grip {
  flex: none;
  width: 9px;
  height: 26px;
  background:
    linear-gradient(#a0a0a0, #a0a0a0) 0 0 / 1px 26px no-repeat,
    repeating-linear-gradient(#8c8c8c 0 1px, transparent 1px 2px) 4px 3px / 3px 20px no-repeat;
}
.grip:first-child {
  width: 7px;
  background: repeating-linear-gradient(#8c8c8c 0 1px, transparent 1px 2px) 2px 3px / 3px 20px no-repeat;
}
.endline {
  flex: none;
  width: 1px;
  height: 25px;
  background: #999;
}
.right-tools { display: flex; margin-left: auto; gap: 2px; }
.chart {
  position: relative;
  display: flex;
  flex-direction: column;
  flex: 1;
  min-height: 0;
  padding: 2px 0 0 4px;
  background: #14213b;
  border-top: 1px solid #7f7f7f;
  box-shadow: inset 2px 0 0 #8c9094, inset -1px 0 0 #c8c8c8;
}
.row { display: flex; min-height: 0; }
.main-row { flex: 643; margin-bottom: 1px; }
.sub-row { flex: 267; }
.plot {
  position: relative;
  flex: 1;
  min-width: 0;
  border: 1px solid #fff;
  overflow: hidden;
}
.canvas {
  position: absolute;
  left: 0;
  top: 0;
}
.axis {
  width: 46px;
  flex: none;
}
.t9 { font-size: 9px; }
.t10 { font-size: 10px; }
.t11 { font: 11px "Liberation Sans", Arial, sans-serif; }
.arial10 { font: 10px "Liberation Sans", Arial, sans-serif; }
.serif { font: 12px "Liberation Serif", serif; }
.big { font-size: 15px; }
.lvl { font: bold 10px "DejaVu Sans", sans-serif; }
.long { stroke-dasharray: 18 6; }
.long.late { stroke-dashoffset: 10; }
.dashdot { stroke-dasharray: 9 6 3 6; }
.b { fill: #4682b4; }
.r { fill: #dc143c; }
.r .core { fill: #ff4500; }
.g { fill: #777; }

.ind {
  width: 60px;
  height: 20px;
  border: 1px solid #000;
  background: #696969;
  font: 12px "Liberation Sans", Arial, sans-serif;
}
.ind.on { background: #808080; color: #daa520; }
.atr {
  position: absolute;
  left: 20px;
  top: 100px;
  color: #ff8c00;
}
.zz {
  position: absolute;
  left: 570px;
  top: 13px;
  display: flex;
  gap: 10px;
}

.stats {
  position: absolute;
  right: 102px;
  top: 26px;
  table-layout: fixed;
  border-collapse: collapse;
  width: 238px;
  font: 11px "Liberation Sans", Arial, sans-serif;
  color: #696969;
}
.c1 { width: 69px; }
.c2 { width: 42px; }
.c3 { width: 65px; }
.c4 { width: 46px; }
.c5 { width: 16px; }
.stats th, .stats td {
  padding: 0;
  height: 13px;
  line-height: 13px;
  text-align: right;
  font-weight: normal;
  white-space: nowrap;
  color: #00ff00;
}
.stats th { font-size: 10px; color: #696969; }
.stats th.out { text-indent: 7px; text-align: left; }
.stats th.out + th.out { text-indent: 31px; }
.stats .name { text-align: left; padding-left: 2px; color: #696969; }
.stats th.name { padding-left: 4px; }
.stats .sub td { color: #696969; }
.stats .sub .name { padding-left: 7px; }
.stats .rule td { font-size: 10px; color: #696969; }

.symbols {
  position: absolute;
  right: 12px;
  top: 30px;
  display: flex;
  flex-direction: column;
  gap: 4px;
}
.symbols button {
  width: 80px;
  height: 16px;
  border: 2px solid;
  border-color: #6ba3d6 #24608f #24608f #6ba3d6;
  background: #4682b4;
  color: #eef8f8;
  font: 10px/12px "Liberation Sans", Arial, sans-serif;
}
.symbols .active {
  border-color: #c8c4bc #606060 #606060 #c8c4bc;
  background: #f5fffa;
  color: #4682b4;
}

.news {
  position: absolute;
  left: 0;
  bottom: 0;
  width: 518px;
  font-family: "DejaVu Sans", sans-serif;
}
.news-panel {
  height: 149px;
  border-radius: 0 74px 74px 0;
  background: #1e2328;
  box-shadow: inset 0 0 0 1px #171b20;
}
.news-panel table {
  table-layout: fixed;
  border-collapse: collapse;
  width: 500px;
  color: #93979b;
}
.n-day { width: 24px; }
.n-time { width: 32px; }
.n-dot { width: 17px; }
.n-cur { width: 27px; }
.n-event { width: 200px; }
.n-est { width: 50px; }
.n-prev { width: 50px; }
.n-fcst { width: 45px; }
.news th {
  padding: 0;
  height: 17px;
  font-size: 10px;
  font-weight: normal;
  text-align: left;
  color: #fff;
}
.news th:nth-child(2) { padding-left: 9px; }
.news .h-time { padding-left: 15px; }
.news .h-event { padding-left: 40px; }
.news td {
  padding: 0;
  height: 13px;
  line-height: 13px;
  white-space: nowrap;
}
.news .day { padding-left: 2px; }
.news .time { text-align: right; font-size: 10px; }
.news .act { padding-left: 5px; }
.dot {
  display: block;
  width: 9px;
  height: 9px;
  margin: 0 0 2px 6px;
  border-radius: 50%;
  background: #d2504e;
}
.high .cur { color: #d2504e; }
.mid .cur { color: #ffc814; }
.mid .dot { background: #ffc814; }
.done { color: #565a5e; }
.done .dot { background: #606466; }
.news-foot {
  display: flex;
  gap: 28px;
  height: 16px;
  align-items: center;
  padding-left: 3px;
  color: #748074;
}
.past {
  position: absolute;
  left: 271px;
  bottom: 4px;
  width: 187px;
  height: 11px;
  background: rgba(90, 90, 90, 0.85);
  color: #080808;
  text-align: center;
  font: 10px/11px "Liberation Sans", Arial, sans-serif;
}
.past.over { bottom: 22px; background: none; }
.vdash {
  position: absolute;
  left: 328px;
  top: 0;
  bottom: 0;
  width: 1px;
  background: repeating-linear-gradient(#c4c8cc 0 4px, transparent 4px 7px);
}

.signals {
  position: absolute;
  right: 12px;
  top: 18px;
  display: flex;
  gap: 13px;
  color: #ffa500;
  font: bold 12px/22px "DejaVu Sans", sans-serif;
  text-align: center;
}
.signals p { margin: 0 0 6px; }
.signals .buy { color: #008000; padding-right: 10px; }
.sig-arrows {
  display: flex;
  flex-direction: column;
  gap: 22px;
  padding-top: 16px;
}
.sub-axis {
  position: relative;
  box-sizing: border-box;
  padding-left: 3px;
  line-height: 12px;
}
.sub-axis span { display: block; padding-top: 2px; }
.sub-axis .low {
  position: absolute;
  left: 3px;
  bottom: 7px;
}
.sub-axis .lowest {
  position: absolute;
  left: 3px;
  bottom: 1px;
}
.timeline {
  position: relative;
  display: flex;
  flex: none;
  height: 20px;
  overflow: hidden;
}
.tick {
  width: 63px;
  flex: none;
  padding-top: 4px;
  line-height: 12px;
  white-space: nowrap;
  text-indent: -1px;
  border-left: 1px solid #fff;
  border-image: linear-gradient(#fff 3px, transparent 3px) 1;
}
.badge {
  position: absolute;
  left: 1201px;
  top: 3px;
  width: 80px;
  line-height: 12px;
  background: #ffc20e;
  color: #101010;
  text-align: center;
}
.watermark {
  position: absolute;
  right: 82px;
  bottom: 5px;
  width: 256px;
  color: rgba(255, 255, 255, 0.42);
  font: 14px/20px "Open Sans", "Noto Sans", sans-serif;
  white-space: nowrap;
}
.watermark p { margin: 0; }
.wm-title { font-size: 19px; line-height: 24px; }
.statusline {
  flex: none;
  height: 1px;
  border-top: 2px solid #f0efe8;
  background: #000;
}
.statusline span {
  display: block;
  width: 86px;
  height: 1px;
  margin-left: 7px;
  background: #fff;
}
</style>
